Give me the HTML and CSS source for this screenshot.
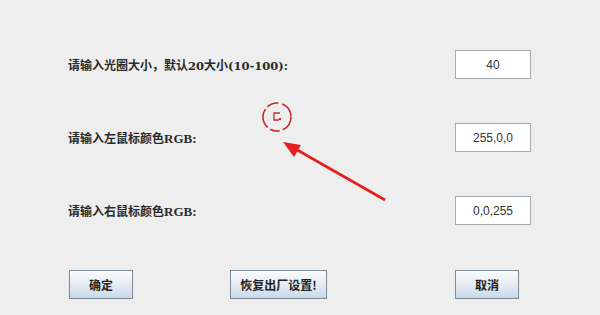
FILE: index.html
```html
<!DOCTYPE html>
<html lang="zh-CN">
<head>
  <meta charset="UTF-8" />
  <title>设置</title>
  <link rel="stylesheet" href="styles.css">
</head>
<body>
  <div class="dialog">
    <div class="row">
      <span class="label">请输入光圈大小，默认<b class="num">20</b>大小<b class="num">(10-100):</b></span>
      <input class="field" type="text" value="40" />
    </div>
    <div class="row">
      <span class="label">请输入左鼠标颜色<b>RGB:</b></span>
      <input class="field" type="text" value="255,0,0" />
    </div>
    <div class="row">
      <span class="label">请输入右鼠标颜色<b>RGB:</b></span>
      <input class="field" type="text" value="0,0,255" />
    </div>
    <div class="buttons">
      <button class="btn ok">确定</button>
      <button class="btn reset">恢复出厂设置!</button>
      <button class="btn cancel">取消</button>
    </div>

    <svg class="annot" width="600" height="315" viewBox="0 0 600 315">
      <circle cx="277" cy="117" r="14" fill="none" stroke="#c42a2a" stroke-width="1.6" stroke-dasharray="16 3 10 3 20 3 12 4" />
      <path d="M280 113 L274 113 L274 120 L279 120" fill="none" stroke="#c42a2a" stroke-width="1.3" />
      <rect x="279" y="118" width="2" height="2" fill="#c42a2a" />
      <line x1="385" y1="200" x2="292" y2="147" stroke="#e3201f" stroke-width="2.6" />
      <polygon points="283,142 301,145 294,157" fill="#e3201f" />
    </svg>
  </div>
</body>
</html>
```

FILE: styles.css
```css
body {
  margin: 0;
  padding: 0;
  background: #eeeeee;
  font-family: "Noto Sans CJK SC", "Liberation Serif", serif;
}

.dialog {
  position: relative;
  width: 600px;
  height: 315px;
  padding-top: 50px;
  box-sizing: border-box;
}

.row {
  display: flex;
  justify-content: space-between;
  align-items: center;
  height: 29px;
  padding: 0 69px 0 68px;
  margin-bottom: 44px;
}

.row:nth-child(3) {
  margin-bottom: 45px;
}

.label {
  font-size: 12px;
  font-weight: bold;
  color: #2a2a2a;
}

.label b {
  font-family: "Liberation Serif", serif;
  font-size: 13px;
}

.label b.num {
  font-family: "DejaVu Serif", serif;
  font-size: 11.5px;
}

.field {
  width: 76px;
  height: 29px;
  box-sizing: border-box;
  border: 1px solid #a3abb3;
  background: #ffffff;
  text-align: center;
  font-family: "Liberation Sans", Arial, sans-serif;
  font-size: 12px;
  color: #333333;
  padding: 0;
  outline: none;
}

.buttons {
  display: flex;
  align-items: center;
  padding-left: 69px;
}

.btn {
  height: 29px;
  box-sizing: border-box;
  border: 1px solid #7b8a98;
  background: linear-gradient(to bottom, #fbfcfd 0%, #e8eef5 45%, #c9d9e9 100%);
  font-family: "Noto Sans CJK SC", sans-serif;
  font-size: 12px;
  font-weight: bold;
  color: #222222;
  padding: 0;
  cursor: pointer;
}

.ok {
  width: 64px;
}

.reset {
  width: 97px;
  margin-left: 97px;
}

.cancel {
  width: 64px;
  margin-left: 128px;
}

.annot {
  position: absolute;
  top: 0;
  left: 0;
  pointer-events: none;
}
```
